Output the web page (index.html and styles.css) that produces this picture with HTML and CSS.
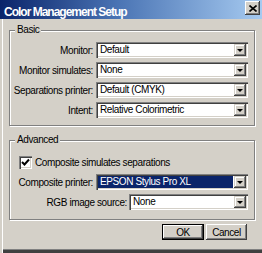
FILE: index.html
```html
<!DOCTYPE html>
<html>
<head>
<meta charset="utf-8">
<link rel="stylesheet" href="styles.css">
</head>
<body>
<div class="dialog">
  <div class="titlebar">
    <span class="title">Color Management Setup</span>
    <span class="close"><svg width="8" height="7" viewBox="0 0 8 7"><path d="M0.5 0.5 L7.5 6.5 M7.5 0.5 L0.5 6.5" stroke="#000" stroke-width="1.6" fill="none"/></svg></span>
  </div>
  <div class="content">
    <div class="group basic">
      <span class="legend">Basic</span>
      <div class="row"><span class="label">Monitor:</span><div class="select"><span class="value">Default</span><span class="arrow"><i></i></span></div></div>
      <div class="row"><span class="label">Monitor simulates:</span><div class="select"><span class="value">None</span><span class="arrow"><i></i></span></div></div>
      <div class="row"><span class="label">Separations printer:</span><div class="select"><span class="value">Default (CMYK)</span><span class="arrow"><i></i></span></div></div>
      <div class="row"><span class="label">Intent:</span><div class="select"><span class="value">Relative Colorimetric</span><span class="arrow"><i></i></span></div></div>
    </div>
    <div class="group advanced">
      <span class="legend">Advanced</span>
      <div class="check-row">
        <span class="checkbox"><svg width="9" height="9" viewBox="0 0 9 9"><path d="M1 4 L3.5 6.5 L8 1.5" stroke="#000" stroke-width="2" fill="none"/></svg></span>
        <span>Composite simulates separations</span>
      </div>
      <div class="row composite"><span class="label">Composite printer:</span><div class="select"><span class="value selected">EPSON Stylus Pro XL</span><span class="arrow"><i></i></span></div></div>
      <div class="row rgb"><span class="label">RGB image source:</span><div class="select"><span class="value">None</span><span class="arrow"><i></i></span></div></div>
    </div>
    <div class="buttons">
      <span class="btn default">OK</span>
      <span class="btn">Cancel</span>
    </div>
  </div>
</div>
</body>
</html>
```
FILE: styles.css
```css
* { box-sizing: border-box; }
html, body { margin: 0; padding: 0; }
body {
  width: 262px;
  height: 253px;
  overflow: hidden;
  font-family: "Liberation Sans", Arial, sans-serif;
  font-size: 10px;
  letter-spacing: -0.4px;
  color: #000;
  background: #d4d0c8;
}
.dialog {
  width: 262px;
  height: 253px;
  background: #d4d0c8;
  box-shadow: inset 2px 0 0 #d4d0c8, inset 3px 0 0 #fff, inset 0 -3px 0 #404040, inset 0 -4px 0 #808080;
}
.titlebar {
  height: 19px;
  display: flex;
  align-items: flex-start;
  background: linear-gradient(to right, #0a246a 0%, #4a74b4 45%, #a6caf0 100%);
  padding-left: 4px;
}
.title {
  font-family: "Liberation Sans", Arial, sans-serif;
  font-weight: bold;
  font-size: 12px;
  line-height: 12px;
  padding-top: 6px;
  letter-spacing: -1px;
  color: #fff;
  white-space: nowrap;
}
.close {
  margin-left: auto;
  margin-top: 1px;
  margin-right: 2px;
  width: 15px;
  height: 14px;
  background: #d4d0c8;
  display: flex;
  align-items: center;
  justify-content: center;
  box-shadow: inset -1px -1px 0 #404040, inset 1px 1px 0 #fff, inset -2px -2px 0 #808080;
}
.content {
  padding: 11px 7px 0 9px;
}
.group {
  position: relative;
  border: 1px solid #808080;
  box-shadow: inset 1px 1px 0 #fff, 1px 1px 0 #fff;
}
.legend {
  position: absolute;
  top: -7px;
  left: 5px;
  padding: 0 2px;
  line-height: 12px;
  background: #d4d0c8;
}
.basic {
  height: 96px;
  padding-top: 11px;
  display: flex;
  flex-direction: column;
  gap: 4px;
}
.advanced {
  margin-top: 14px;
  height: 80px;
  padding-top: 15px;
}
.row {
  display: flex;
  align-items: center;
  height: 16px;
}
.label {
  width: 83px;
  text-align: right;
  margin-right: 3px;
  white-space: nowrap;
}
.select {
  width: 152px;
  height: 16px;
  display: flex;
  align-items: stretch;
  padding: 2px;
  background: #fff;
  box-shadow: inset 1px 1px 0 #808080, inset 2px 2px 0 #404040, inset -1px -1px 0 #fff, inset -2px -2px 0 #d4d0c8;
}
.value {
  flex: 1;
  padding-left: 2px;
  line-height: 12px;
  white-space: nowrap;
  overflow: hidden;
}
.value.selected {
  background: #0a246a;
  color: #fff;
  margin-right: 1px;
}
.arrow {
  width: 12px;
  height: 12px;
  background: #d4d0c8;
  display: flex;
  align-items: center;
  justify-content: center;
  box-shadow: inset -1px -1px 0 #404040, inset 1px 1px 0 #d4d0c8, inset -2px -2px 0 #808080, inset 2px 2px 0 #fff;
}
.arrow i {
  width: 0;
  height: 0;
  border-left: 3px solid transparent;
  border-right: 3px solid transparent;
  border-top: 3px solid #000;
  margin-top: 1px;
}
.check-row {
  display: flex;
  align-items: center;
  height: 13px;
  padding-left: 9px;
  gap: 3px;
}
.checkbox {
  width: 13px;
  height: 13px;
  background: #fff;
  display: flex;
  align-items: center;
  justify-content: center;
  box-shadow: inset 1px 1px 0 #808080, inset 2px 2px 0 #404040, inset -1px -1px 0 #fff, inset -2px -2px 0 #d4d0c8;
}
.composite { margin-top: 5px; }
.rgb { margin-top: 4px; }
.rgb .label { width: 117px; margin-right: 2px; }
.rgb .select { width: 119px; }
.buttons {
  display: flex;
  justify-content: flex-end;
  gap: 2px;
  margin-top: 4px;
  padding-right: 8px;
}
.btn {
  height: 16px;
  width: 41px;
  display: flex;
  align-items: center;
  justify-content: center;
  background: #d4d0c8;
  box-shadow: inset -1px -1px 0 #404040, inset 1px 1px 0 #fff, inset -2px -2px 0 #808080;
}
.btn.default {
  width: 42px;
  border: 1px solid #000;
  box-shadow: inset -1px -1px 0 #404040, inset 1px 1px 0 #fff, inset -2px -2px 0 #808080;
}
```
